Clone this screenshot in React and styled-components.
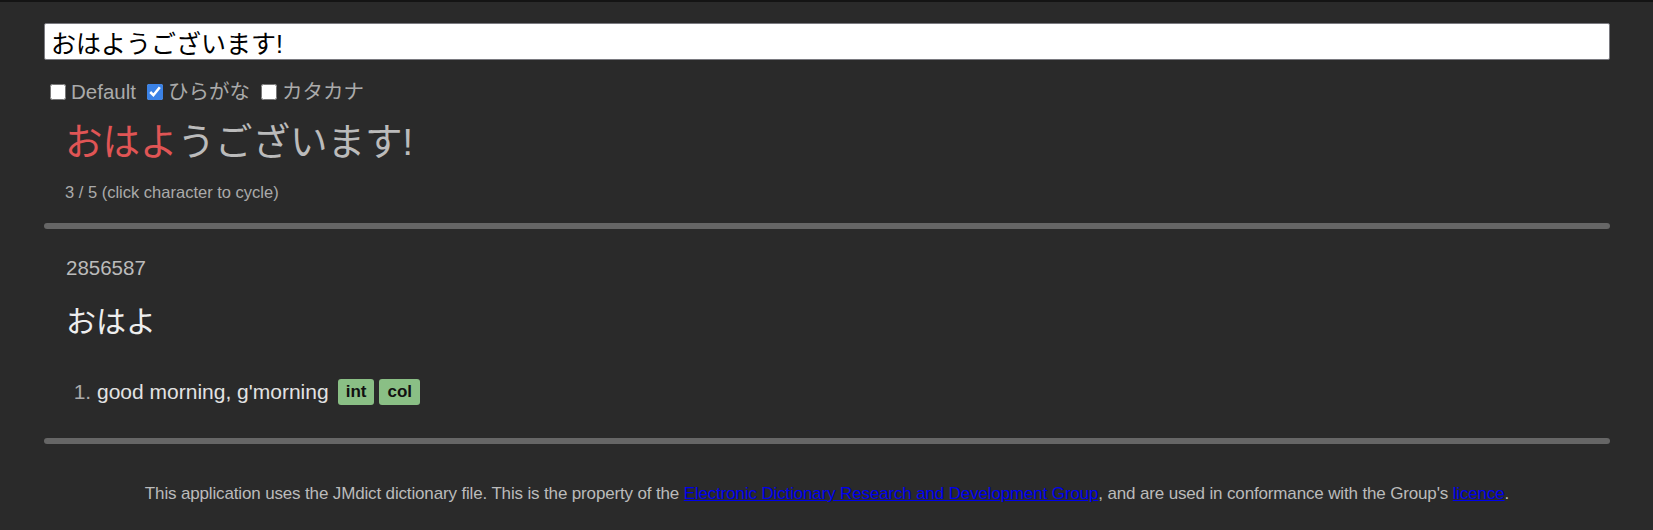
import React, { useState } from 'react'
import styled, { createGlobalStyle } from 'styled-components'

const GlobalStyle = createGlobalStyle`
  html, body {
    margin: 0;
    padding: 0;
    background: #2a2a2a;
  }
  body {
    border-top: 2px solid #141414;
    font-family: "Liberation Sans", "Noto Sans CJK JP", sans-serif;
    color: #bbb;
  }
`

const text = 'おはようございます!'
const modes = ['Default', 'ひらがな', 'カタカナ']

const App = () => {
  const [query, setQuery] = useState(text)
  const [mode, setMode] = useState(1)
  const [cursor, setCursor] = useState(3)

  return (
    <Page>
      <GlobalStyle />
      <SearchInput value={query} onChange={e => setQuery(e.target.value)} />
      <Options>
        {modes.map((m, i) => (
          <Option key={m}>
            <Check type='checkbox' checked={mode === i} onChange={() => setMode(i)} />
            {m}
          </Option>
        ))}
      </Options>
      <Sentence>
        {query.split('').map((c, i) => (
          <Char key={i} $active={i < cursor} onClick={() => setCursor(i + 1)}>{c}</Char>
        ))}
      </Sentence>
      <Hint>{cursor} / 5 (click character to cycle)</Hint>
      <Bar />
      <Entry>
        <EntryId>2856587</EntryId>
        <Word>おはよ</Word>
        <Senses>
          <Sense>
            good morning, g'morning
            <Tags>
              <Tag>int</Tag>
              <Tag>col</Tag>
            </Tags>
          </Sense>
        </Senses>
      </Entry>
      <Bar />
      <Footer>
        This application uses the JMdict dictionary file. This is the property of the{' '}
        <a href='#'>Electronic Dictionary Research and Development Group</a>, and are used in conformance with the Group's{' '}
        <a href='#'>licence</a>.
      </Footer>
    </Page>
  )
}

const Page = styled.div`
  padding: 21px 43px 0 44px;
`

const SearchInput = styled.input`
  display: block;
  box-sizing: border-box;
  width: 100%;
  height: 37px;
  margin: 0;
  padding: 0 6px;
  border: 1px solid #7a7a80;
  border-radius: 2px;
  background: #fff;
  color: #000;
  font-family: "Liberation Sans", "Noto Sans CJK JP", sans-serif;
  font-size: 25px;
  outline: none;
`

const Options = styled.div`
  display: flex;
  align-items: center;
  height: 24px;
  margin-top: 20px;
  padding-left: 6px;
  gap: 11px;
`

const Option = styled.label`
  display: flex;
  align-items: center;
  gap: 5px;
  font-size: 20.5px;
  line-height: 24px;
  color: #aaa;
`

const Check = styled.input`
  width: 16px;
  height: 16px;
  margin: 0;
  accent-color: #3b82e6;
`

const Sentence = styled.div`
  margin-top: 17px;
  padding-left: 21px;
  font-size: 37.5px;
  line-height: 43px;
  color: #bbb;
`

const Char = styled.span`
  cursor: pointer;
  color: ${p => (p.$active ? '#e05555' : '#bbb')};
`

const Hint = styled.div`
  margin-top: 19px;
  padding-left: 21px;
  font-size: 16.5px;
  line-height: 18px;
  color: #aaa;
`

const Bar = styled.hr`
  height: 6px;
  margin: 22px 0 0;
  border: none;
  border-radius: 3px;
  background: #666;
`

const Entry = styled.div`
  padding: 27px 0 11px 22px;
`

const EntryId = styled.div`
  font-size: 20.5px;
  line-height: 24px;
  color: #bbb;
`

const Word = styled.div`
  margin-top: 24px;
  font-size: 30px;
  line-height: 36px;
  color: #eee;
`

const Senses = styled.ol`
  margin: 39px 0 0;
  padding-left: 31px;
  font-size: 21px;
  line-height: 26px;
  color: #aaa;
`

const Sense = styled.li`
  color: #e2e2e2;
  &::marker {
    color: #aaa;
  }
`

const Tags = styled.span`
  display: inline-flex;
  gap: 5px;
  margin-left: 9px;
  vertical-align: top;
`

const Tag = styled.span`
  padding: 0 8px;
  height: 26px;
  line-height: 26px;
  border-radius: 3px;
  background: #8abf85;
  color: #111;
  font-size: 17px;
  font-weight: bold;
`

const Footer = styled.p`
  margin: 39px 0 0;
  text-align: center;
  font-family: "Liberation Sans", sans-serif;
  font-size: 17px;
  letter-spacing: -0.15px;
  line-height: 22px;
  color: #bbb;

  a {
    color: #0000ee;
  }
`

export default App
